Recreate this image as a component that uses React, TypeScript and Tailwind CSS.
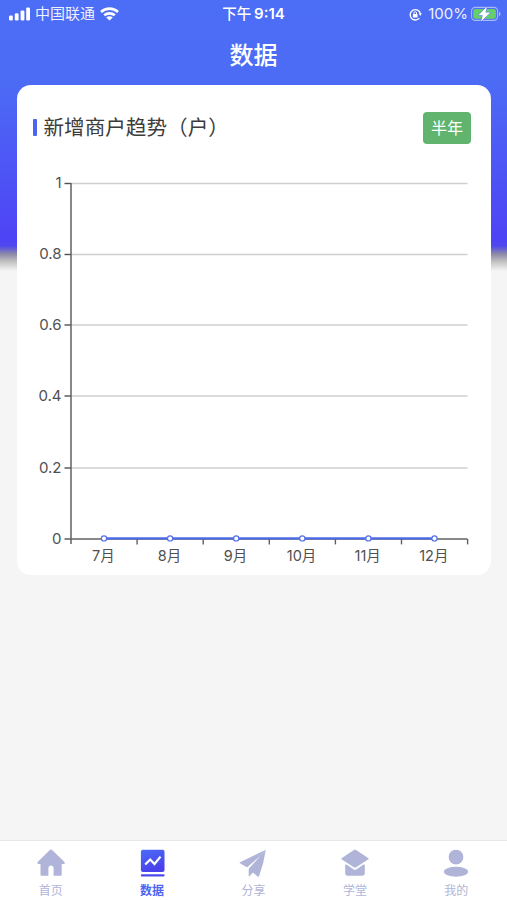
import 'react';

const Y_TICKS = [
  { label: '1', y: 23.5 },
  { label: '0.8', y: 94.5 },
  { label: '0.6', y: 165 },
  { label: '0.4', y: 236 },
  { label: '0.2', y: 308 },
  { label: '0', y: 379 },
];
const MONTHS = ['7月', '8月', '9月', '10月', '11月', '12月'];
const AXIS_X = 54;
const STEP = 66.1;

const StatusBar = () => (
  <div className="grid h-7 grid-cols-3 items-center text-white">
    <div className="flex items-center pl-[9px]">
      <svg width="22" height="14" viewBox="0 0 22 14" fill="currentColor">
        <rect x="0" y="8.6" width="3.8" height="4.9" rx="1.2" />
        <rect x="5.8" y="6.2" width="3.8" height="7.3" rx="1.2" />
        <rect x="11.6" y="3.4" width="3.8" height="10.1" rx="1.2" />
        <rect x="17.2" y="0.4" width="3.8" height="13.1" rx="1.2" />
      </svg>
      <span className="ml-1 text-[15px] leading-7 opacity-90">中国联通</span>
      <svg className="ml-[5px]" width="19" height="14" viewBox="0 0 19 14" fill="none" stroke="currentColor" strokeWidth="2.7">
        <path d="M1 4.9C6 .6 13 .6 18 4.9" />
        <path d="M4.2 8.3c3-2.6 7.6-2.6 10.6 0" />
        <path d="M9.5 13.6 6.2 10.5c2-1.6 4.6-1.6 6.6 0Z" fill="currentColor" stroke="none" />
      </svg>
    </div>
    <div className="text-center text-[14.5px] font-medium leading-7">
      下午 <span className="-ml-[1px] text-[15px] font-semibold">9:14</span>
    </div>
    <div className="flex items-center justify-end pr-[6px]">
      {/* 方向锁定 */}
      <svg width="13" height="13" viewBox="0 0 14 14" fill="none" stroke="currentColor">
        <path d="M11.2 10.9A5.6 5.6 0 1 1 12.3 6" strokeWidth="1.5" />
        <path d="M10.4 5.6h3.4l-1.7 3Z" fill="currentColor" stroke="none" />
        <rect x="4.2" y="6.4" width="5" height="3.8" rx="0.6" fill="currentColor" stroke="none" />
        <path d="M5.3 6.6V5.4a1.4 1.4 0 0 1 2.8 0v1.2" strokeWidth="1" />
      </svg>
      <span className="ml-[6px] text-[15px] leading-7 opacity-90">100%</span>
      <svg className="ml-[3px]" width="30" height="16" viewBox="0 0 30 16">
        <rect x="0.6" y="1.4" width="26" height="13" rx="3.6" fill="none" stroke="#a7b8fb" strokeWidth="1.1" />
        <path d="M28 5.8c2 .6 2 3.8 0 4.4Z" fill="#a7b8fb" />
        <rect x="2.3" y="3" width="22.6" height="9.8" rx="2" fill="#67cf6a" />
        <path d="M16 .6 7.4 9.2h4.3l-1.6 6.2L19.4 6.6h-4.9Z" fill="#fff" stroke="#4c6df5" strokeWidth="1" paintOrder="stroke" />
      </svg>
    </div>
  </div>
);

const TrendChart = () => (
  <svg width="474" height="415" viewBox="0 0 474 415" fontSize="15" fill="#505050">
    {/* 网格线 + Y 轴刻度 */}
    {Y_TICKS.map(({ label, y }) => (
      <g key={label}>
        {label !== '0' && <path d={`M${AXIS_X} ${y}H450.5`} stroke="#cfcfcf" strokeWidth="1.3" />}
        <path d={`M47.5 ${y}H${AXIS_X}`} stroke="#505050" strokeWidth="1.4" />
        <text x="44.5" y={y + 4.5} textAnchor="end">{label}</text>
      </g>
    ))}
    <path d={`M${AXIS_X} 23V384`} stroke="#606060" strokeWidth="1.5" />
    <path d="M54 379H450.5" stroke="#606060" strokeWidth="1.4" />
    {MONTHS.map((m, i) => (
      <g key={m}>
        <path d={`M${AXIS_X + STEP * (i + 1)} 379v5.4`} stroke="#606060" strokeWidth="1.4" />
        <text x={86.3 + STEP * i} y="400.5" textAnchor="middle" fontSize="14.5">{m}</text>
      </g>
    ))}
    <path d="M87 378.4H417.5" stroke="#4c6be8" strokeWidth="2.2" />
    {MONTHS.map((m, i) => (
      <circle key={m} cx={87 + STEP * i} cy="378.4" r="2.6" fill="#fff" stroke="#5470ea" strokeWidth="1.2" />
    ))}
  </svg>
);

const TABS = [
  {
    name: '首页',
    icon: (
      <path d="M12.6 1.2c.9-.8 1.9-.8 2.8 0l11.8 11.5c1 1 .6 2.2-.6 2.2h-1.9v10.3c0 1.1-.5 1.6-1.5 1.6h-6.6v-7.6c0-3.6-5.2-3.6-5.2 0v7.6H5.1c-1.1 0-1.6-.5-1.6-1.6V14.9H1.6c-1.3 0-1.7-1.2-.7-2.2Z" />
    ),
  },
  {
    name: '数据',
    icon: (
      <>
        <defs>
          <linearGradient id="tabBlue" x1="0" y1="0" x2="0.4" y2="1">
            <stop stopColor="#4b6cf6" />
            <stop offset="1" stopColor="#4a40ec" />
          </linearGradient>
        </defs>
        <rect x="2.9" y="0.8" width="23.6" height="22.3" rx="2" fill="url(#tabBlue)" />
        <rect x="2.9" y="25.2" width="23.6" height="2.3" rx="0.8" fill="#4d48ed" />
        <path d="m7.2 15.6 5-5.1 4.3 4.5 6-7.4" fill="none" stroke="#fff" strokeWidth="2.2" />
      </>
    ),
  },
  {
    name: '分享',
    icon: (
      <>
        <path d="M26.6.8 1 13.2c-.5.3-.5.8 0 1.1l6 3.5c.6.4 1 .3 1.5-.1Z" />
        <path d="M26.8.8 10.4 19c-.5.6-.7 1-.7 1.7v6c0 .8.6.9 1 .4l3.3-3.6 4.6 3.9c.7.6 1.3.3 1.5-.5l4.1-13Z" />
        <path d="M26.6.8 22 6.4 8.6 17.8 7 17Z" />
      </>
    ),
  },
  {
    name: '学堂',
    icon: (
      <>
        <path d="M12.9 1c.8-.5 1.4-.5 2.2 0l12 7.9c.8.5.8 1.1 0 1.6l-12 7.8c-.8.5-1.4.5-2.2 0L.9 10.5c-.8-.5-.8-1.1 0-1.6Z" />
        <path d="M4.2 16.2c0-.8.6-1 1.3-.6l7.3 4.8c.8.5 1.6.5 2.4 0l7.3-4.8c.7-.4 1.3-.2 1.3.6v8.1c0 1.6-.9 2.5-2.5 2.5H6.7c-1.6 0-2.5-.9-2.5-2.5Z" />
      </>
    ),
  },
  {
    name: '我的',
    icon: (
      <>
        <circle cx="14" cy="8.1" r="7.4" />
        <ellipse cx="14" cy="22.8" rx="12.1" ry="5" />
      </>
    ),
  },
];

const App = () => (
  <div className="flex h-[900px] w-[507px] flex-col overflow-hidden bg-[#f5f5f5] bg-[linear-gradient(#4c6df5_0px,#4c6cf5_80px,#4e43f5_240px,#5048ee_246px,#8c8aa7_254px,#c5c4c4_262px,#f5f5f5_271px)] font-['Inter','Noto_Sans_CJK_SC',sans-serif]">
    <StatusBar />
    <h1 className="h-[57px] pt-[2px] text-center text-[24px] font-medium leading-[52px] text-white">数据</h1>

    {/* 新增商户趋势 */}
    <section className="ml-[17px] h-[490px] w-[474px] rounded-[14px] bg-white">
      <div className="flex h-[75px] items-center pl-4 pr-5 pt-[11px]">
        <span className="mb-[2px] h-[17px] w-1 rounded-[1px] bg-[#4c65ee]" />
        <h2 className="ml-[6.5px] text-[20.6px] leading-8 text-[#3c3c3c]">新增商户趋势（户）</h2>
        <button className="ml-auto h-8 w-[48px] rounded bg-[#60b46e] text-[16px] leading-8 text-white">半年</button>
      </div>
      <TrendChart />
    </section>

    <nav className="mt-auto grid h-[60px] grid-cols-5 border-t border-[#e6e6e6] bg-white text-[#b0b4d8]">
      {TABS.map(({ name, icon }) => (
        <div key={name} className="flex flex-col items-center pt-2">
          <svg width="28" height="28" viewBox="0 0 28 28" fill="currentColor">{icon}</svg>
          <span className={name === '数据' ? 'mt-[6px] text-[12px] font-semibold leading-4 text-[#4c65f2]' : 'mt-[6px] text-[12px] leading-4'}>
            {name}
          </span>
        </div>
      ))}
    </nav>
  </div>
);

export default App;
